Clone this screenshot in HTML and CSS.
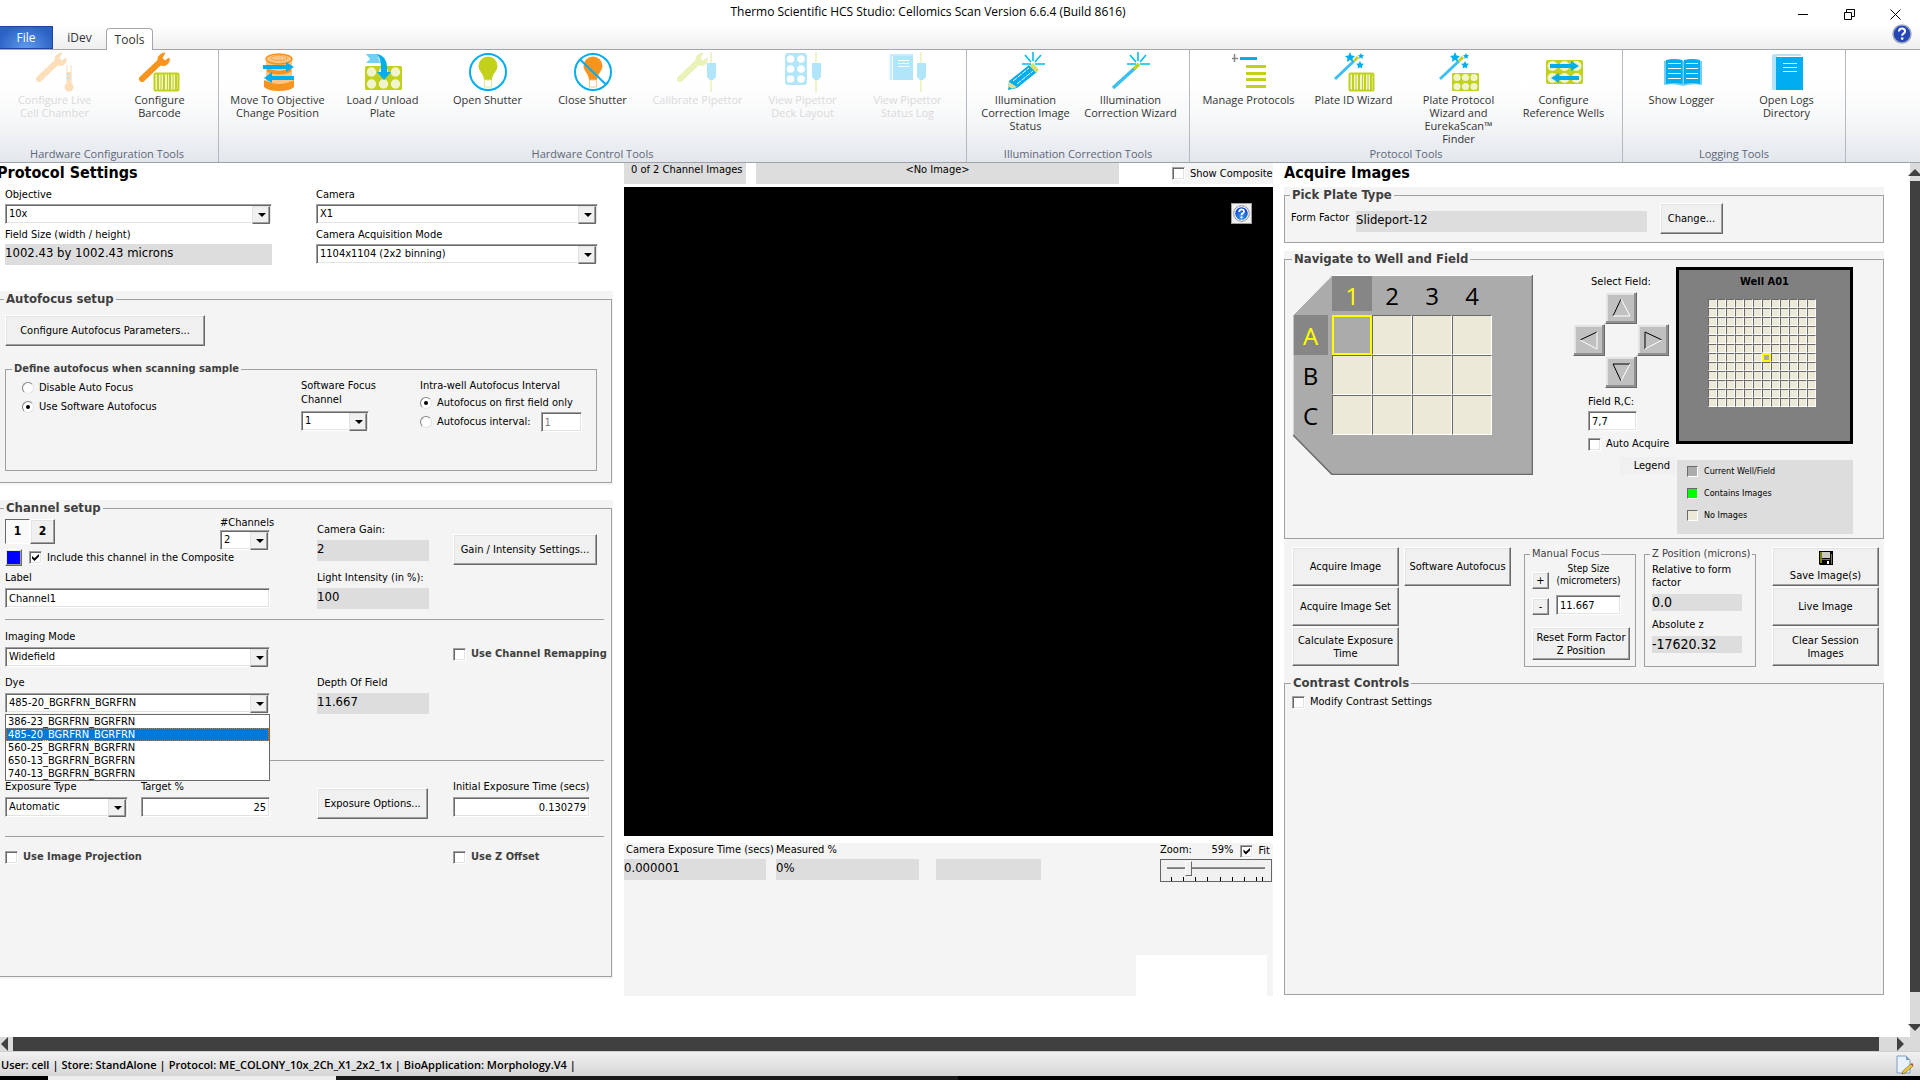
FILE: index.html
```html
<!DOCTYPE html>
<html lang="en">
<head>
  <meta charset="UTF-8">
  <title>Thermo Scientific HCS Studio</title>
  <meta name="viewport" content="width=device-width, initial-scale=1.0">
  <link rel="stylesheet" href="styles.css">
</head>
<body>
  <svg class="defs" aria-hidden="true">
    <symbol id="wrench" viewBox="0 0 48 40">
      <path d="M6 27 L25 9" stroke="currentColor" stroke-width="6" stroke-linecap="round" fill="none"/>
      <path d="M28 1 Q21 3 22 9 Q24 15 30 13 Q34 11 33 6 L29 9 L26 6 L29 1 Z" fill="currentColor" stroke="currentColor"/>
    </symbol>
    <symbol id="pipette" viewBox="0 0 48 40">
      <path d="M37 0 V40" stroke="#c1d11c" stroke-width="1.5"/>
      <path d="M33 11 h9 v14 l-3 3 h-3 l-3 -3 z" fill="#00adef"/>
    </symbol>
    <symbol id="barcode" viewBox="0 0 48 40">
      <rect x="18.500" y="21.500" width="24" height="17" rx="1" fill="#eff4cf" stroke="#c1d11c" stroke-width="2"/>
      <path d="M22 22v16M28 22v16M34 22v16M40 22v16" stroke="#c1d11c" stroke-width="2"/>
      <path d="M25 22v16M31.500 22v16M37 22v16" stroke="#c1d11c"/>
    </symbol>
    <symbol id="wand" viewBox="0 0 48 40">
      <path d="M5 27 L24 9" stroke="#3cc0f3" stroke-width="3"/>
      <path d="M24 9 L28 5" stroke="#c1d11c" stroke-width="3"/>
      <path fill="#00adef" d="M20 0l1.500 3.500 3.500.5-2.500 2.500.5 3.500-3-2-3 2 .5-3.500-2.500-2.500 3.500-.5zM31 1l1 2 2 .3-1.500 1.500.4 2-1.900-1-1.900 1 .4-2-1.500-1.500 2-.3zM30 9l1.200 2.400 2.800.4-2 2 .4 2.700-2.400-1.300-2.400 1.300.4-2.700-2-2 2.800-.4z"/>
    </symbol>
    <symbol id="spark" viewBox="0 0 48 40">
      <path d="M31 0v9M20 12h9M33 12h10M23 3l6 7M39 3l-6 7" stroke="#00bdf2" stroke-width="1.600"/>
    </symbol>
    <radialGradient id="helpFill" cy=".75" r=".7"><stop offset="0" stop-color="#35a2ff"/><stop offset="1" stop-color="#0b3fc4"/></radialGradient>
  </svg>

  <header class="titlebar">
    <h1 class="app-title">Thermo Scientific HCS Studio: Cellomics Scan Version 6.6.4 (Build 8616)</h1>
    <div class="window-buttons">
      <button class="win-btn" aria-label="Minimize"><svg width="11" height="11"><path d="M0 5.500h10" stroke="#000"/></svg></button>
      <button class="win-btn" aria-label="Restore"><svg width="11" height="11" fill="none" stroke="#000"><path d="M.5 3.500h7v7h-7zM2.500 3.500v-3h8v7h-3"/></svg></button>
      <button class="win-btn" aria-label="Close"><svg width="11" height="11"><path d="M.5 .5l10 10M10.500 .5l-10 10" stroke="#000"/></svg></button>
    </div>
  </header>

  <nav class="tabs">
    <button class="tab tab-file">File</button>
    <button class="tab">iDev</button>
    <button class="tab tab-active">Tools</button>
    <button class="help-btn" aria-label="Help">
      <svg width="20" height="20"><circle cx="10" cy="10" r="9" fill="#2447b5" stroke="#9fa8bd" stroke-width="1.500"/><path d="M7 7.500q0-3 3-3t3 2.700q0 1.600-1.600 2.400-1.200.7-1.200 2.200" stroke="#fff" stroke-width="2" fill="none"/><circle cx="10.200" cy="14.600" r="1.300" fill="#fff"/></svg>
    </button>
  </nav>

  <section class="ribbon">
    <div class="ribbon-group">
      <div class="ribbon-items">
        <button class="tool" disabled>
          <svg class="icon" viewBox="0 0 48 40" color="#f7941d"><use href="#wrench" x="2"/><path d="M38 13v20" stroke="#f7941d" stroke-width="5"/><path d="M38 12v8" stroke="#fff" stroke-width="3"/><path d="M35 22h4M35 26h4" stroke="#00adef"/><circle cx="38" cy="35" r="4.500" fill="#f7941d"/></svg>
          Configure Live<br>Cell Chamber</button>
        <button class="tool">
          <svg class="icon" viewBox="0 0 48 40" color="#f7941d"><use href="#wrench"/><use href="#barcode"/></svg>
          Configure<br>Barcode</button>
      </div>
      <div class="group-name">Hardware Configuration Tools</div>
    </div>
    <div class="ribbon-group">
      <div class="ribbon-items">
        <button class="tool">
          <svg class="icon" viewBox="0 0 48 40"><path d="M12 7v25h26V7z" fill="#fcc486"/><ellipse cx="25" cy="7" rx="13" ry="5" fill="#fcc486" stroke="#f7941d" stroke-width="1.500"/><ellipse cx="25" cy="6" rx="8" ry="2.500" fill="none" stroke="#f7941d" stroke-dasharray="2 1"/><path d="M13 16q12 6 24 0v4q-12 5-24 0z" fill="#f7941d"/><path d="M10 28q15 8 30 0v7q-4 4-15 4t-15-4z" fill="#f7941d"/><path d="M9 13h23v-3l8 5-8 5v-3H9zM40 24H18v-4l-8 6 8 5v-3h22z" fill="#00adef"/></svg>
          Move To Objective<br>Change Position</button>
        <button class="tool">
          <svg class="icon" viewBox="0 0 48 40"><rect x="6" y="14" width="37" height="24" rx="1.500" fill="#c1d11c"/><g fill="#eff4cf"><circle cx="12.500" cy="20" r="4.700"/><circle cx="24.500" cy="20" r="4.700"/><circle cx="36.500" cy="20" r="4.700"/><circle cx="12.500" cy="32" r="4.700"/><circle cx="24.500" cy="32" r="4.700"/><circle cx="36.500" cy="32" r="4.700"/></g><path d="M7 2h13q-2 4 2 9H7l4-4z" fill="#74cff5"/><path d="M18 2q10 2 10 13v5h4l-7 8-7-8h4v-5q0-8-4-13z" fill="#00adef"/></svg>
          Load / Unload<br>Plate</button>
        <button class="tool">
          <svg class="icon" viewBox="0 0 48 40"><circle cx="24" cy="20" r="18" fill="#fff" stroke="#00adef" stroke-width="2"/><path d="M24 4.500a9.500 9.500 0 0 1 9.500 9.500c0 5-5.500 8-5.500 14h-8c0-6-5.500-9-5.500-14a9.500 9.500 0 0 1 9.500-9.500z" fill="#c1d11c"/><path d="M20.500 28v7h7v-7z" fill="#fff" stroke="#dfe68d"/></svg>
          Open Shutter</button>
        <button class="tool">
          <svg class="icon" viewBox="0 0 48 40"><circle cx="24" cy="20" r="18" fill="#fff"/><path d="M24 4.500a9.500 9.500 0 0 1 9.500 9.500c0 5-5.500 8-5.500 14h-8c0-6-5.500-9-5.500-14a9.500 9.500 0 0 1 9.500-9.500z" fill="#f7941d"/><path d="M20.500 28v7h7v-7z" fill="#fff" stroke="#fcc486"/><path d="M11 7.500l26 25" stroke="#00adef" stroke-width="2"/><circle cx="24" cy="20" r="18" fill="none" stroke="#00adef" stroke-width="2"/></svg>
          Close Shutter</button>
        <button class="tool" disabled>
          <svg class="icon" viewBox="0 0 48 40" color="#c1d11c"><use href="#wrench"/><use href="#pipette"/></svg>
          Calibrate Pipettor</button>
        <button class="tool" disabled>
          <svg class="icon" viewBox="0 0 48 40"><rect x="6" y="1" width="22" height="32" rx="3" fill="#00adef"/><g fill="#fff"><circle cx="11.500" cy="7" r="3.800"/><circle cx="22" cy="7" r="3.800"/><circle cx="11.500" cy="17" r="3.800"/><circle cx="22" cy="17" r="3.800"/><circle cx="11.500" cy="27" r="3.800"/><circle cx="22" cy="27" r="3.800"/></g><use href="#pipette"/></svg>
          View Pipettor<br>Deck Layout</button>
        <button class="tool" disabled>
          <svg class="icon" viewBox="0 0 48 40"><path d="M9 4h20v24H9z" fill="#00adef"/><path d="M7 28V3h22" fill="none" stroke="#00adef" stroke-width="1.500"/><path d="M14 8.500h11M14 11.500h11M14 14.500h11" stroke="#fff"/><use href="#pipette"/></svg>
          View Pipettor<br>Status Log</button>
      </div>
      <div class="group-name">Hardware Control Tools</div>
    </div>
    <div class="ribbon-group">
      <div class="ribbon-items">
        <button class="tool">
          <svg class="icon" viewBox="0 0 48 40"><path d="M6 38l1-9 20-16 8 7-20 16z" fill="#00adef"/><path d="M11 29l16-13M15 32l16-13" stroke="#fff" stroke-dasharray="5 1"/><path d="M27 13l4-2 6 7-3 3z" fill="#d7de6a"/><path d="M6 38l1-8 8 5z" fill="#e3e093"/><path d="M6 38l1-3 3 1.500z" fill="#00adef"/><use href="#spark"/></svg>
          Illumination<br>Correction Image<br>Status</button>
        <button class="tool">
          <svg class="icon" viewBox="0 0 48 40"><path d="M6 36L28 16" stroke="#3cc0f3" stroke-width="3.500"/><path d="M27 17l5-5" stroke="#c1d11c" stroke-width="3.500"/><use href="#spark"/></svg>
          Illumination<br>Correction Wizard</button>
      </div>
      <div class="group-name">Illumination Correction Tools</div>
    </div>
    <div class="ribbon-group">
      <div class="ribbon-items">
        <button class="tool">
          <svg class="icon" viewBox="0 0 48 40"><path d="M7 6.500h6M9.500 2v8" stroke="#888" stroke-width="1.500"/><path d="M15 6.500h17" stroke="#00adef" stroke-width="3"/><path d="M21 14.500h20M21 21.500h20M21 27.500h20M21 34.500h20" stroke="#c1d11c" stroke-width="3"/></svg>
          Manage Protocols</button>
        <button class="tool">
          <svg class="icon" viewBox="0 0 48 40"><use href="#wand"/><use href="#barcode" x="1"/></svg>
          Plate ID Wizard</button>
        <button class="tool">
          <svg class="icon" viewBox="0 0 48 40"><use href="#wand"/><rect x="17" y="21" width="27" height="18" rx="1" fill="#c1d11c"/><g fill="#eff4cf"><circle cx="22" cy="25.500" r="3.600"/><circle cx="30.500" cy="25.500" r="3.600"/><circle cx="39" cy="25.500" r="3.600"/><circle cx="22" cy="34.500" r="3.600"/><circle cx="30.500" cy="34.500" r="3.600"/><circle cx="39" cy="34.500" r="3.600"/></g></svg>
          Plate Protocol<br>Wizard and<br>EurekaScan™<br>Finder</button>
        <button class="tool">
          <svg class="icon" viewBox="0 0 48 40"><rect x="6" y="8" width="37" height="24" rx="2" fill="#c1d11c"/><g fill="#eff4cf"><circle cx="12.500" cy="14" r="5"/><circle cx="24.500" cy="14" r="5"/><circle cx="36.500" cy="14" r="5"/><circle cx="12.500" cy="26" r="5"/><circle cx="24.500" cy="26" r="5"/><circle cx="36.500" cy="26" r="5"/></g><path d="M10 12h21V9l8 5-8 5v-3H10zM39 24H19v-3l-8 5 8 5v-3h20z" fill="#00adef"/></svg>
          Configure<br>Reference Wells</button>
      </div>
      <div class="group-name">Protocol Tools</div>
    </div>
    <div class="ribbon-group">
      <div class="ribbon-items">
        <button class="tool">
          <svg class="icon" viewBox="0 0 48 40"><path d="M6 9h38v24q-10-2-19 1q-9-3-19-1z" fill="#74cff5"/><path d="M8 8q8-2 16.500 0v24q-8-2-16.500 0zM26 8q8-2 16 0v24q-8-2-16 0z" fill="#00adef"/><path d="M10 11.500h13M10 16.500h13M10 21.500h13M10 26.500h13M28 11.500h12M28 16.500h12M28 21.500h12M28 26.500h12" stroke="#fff"/></svg>
          Show Logger</button>
        <button class="tool">
          <svg class="icon" viewBox="0 0 48 40"><path d="M9 4q0-2 3-2h26v2H14v34H9z" fill="#b3e5fa"/><path d="M13 5h27v33H13z" fill="#00adef"/><path d="M20 11.500h14M20 15.500h14M20 19.500h14" stroke="#fff"/></svg>
          Open Logs<br>Directory</button>
      </div>
      <div class="group-name">Logging Tools</div>
    </div>
  </section>

  <div class="workspace">
    <main class="columns">

      <!-- Protocol settings -->
      <section class="settings">
        <h2 class="page-title page-title-left">Protocol Settings</h2>
        <div class="top-fields">
          <div class="field objective">
            <label for="objective">Objective</label>
            <span class="combo"><select id="objective"><option>10x</option></select></span>
          </div>
          <div class="field">
            <label for="camera">Camera</label>
            <span class="combo"><select id="camera"><option>X1</option></select></span>
          </div>
          <div class="field objective">
            <span>Field Size (width / height)</span>
            <output class="readout">1002.43 by 1002.43 microns</output>
          </div>
          <div class="field">
            <label for="acqMode">Camera Acquisition Mode</label>
            <span class="combo"><select id="acqMode"><option>1104x1104 (2x2 binning)</option></select></span>
          </div>
        </div>

        <div class="panel panel-left">
          <fieldset class="group autofocus">
            <legend>Autofocus setup</legend>
            <button class="btn btn-wide">Configure Autofocus Parameters...</button>
            <fieldset class="group group-inner">
              <legend>Define autofocus when scanning sample</legend>
              <div class="af-mode">
                <label class="radio"><input type="radio" name="af">Disable Auto Focus</label>
                <label class="radio"><input type="radio" name="af" checked>Use Software Autofocus</label>
              </div>
              <div class="af-channel">
                <label for="focusChannel">Software Focus<br>Channel</label>
                <span class="combo"><select id="focusChannel"><option>1</option></select></span>
              </div>
              <div class="af-interval">
                <span>Intra-well Autofocus Interval</span>
                <label class="radio"><input type="radio" name="interval" checked>Autofocus on first field only</label>
                <div class="interval-row">
                  <label class="radio"><input type="radio" name="interval">Autofocus interval:</label>
                  <input class="text" type="text" value="1" aria-label="Autofocus interval" disabled>
                </div>
              </div>
            </fieldset>
          </fieldset>
        </div>

        <div class="panel panel-left panel-channel">
          <fieldset class="group channel">
            <legend>Channel setup</legend>
            <div class="row row-gain">
              <div class="col">
                <div class="channel-head">
                  <div class="channel-tabs">
                    <button class="channel-tab channel-tab-on">1</button>
                    <button class="channel-tab">2</button>
                  </div>
                  <div class="channel-count">
                    <label for="channels">#Channels</label>
                    <span class="combo"><select id="channels"><option>2</option></select></span>
                  </div>
                </div>
                <div class="composite">
                  <button class="swatch" aria-label="Channel color"></button>
                  <label class="check"><input type="checkbox" checked>Include this channel in the Composite</label>
                </div>
                <div class="field">
                  <label for="chLabel">Label</label>
                  <input class="text" id="chLabel" type="text" value="Channel1">
                </div>
              </div>
              <div class="col col-readouts">
                <div class="field"><span>Camera Gain:</span><output class="readout">2</output></div>
                <div class="field"><span>Light Intensity (in %):</span><output class="readout">100</output></div>
              </div>
              <div class="col col-gain-btn"><button class="btn btn-gain">Gain / Intensity Settings...</button></div>
            </div>
            <hr>
            <div class="row row-dye">
              <div class="col">
                <div class="field">
                  <label for="mode">Imaging Mode</label>
                  <span class="combo"><select id="mode"><option>Widefield</option></select></span>
                </div>
                <div class="field dye">
                  <label for="dye">Dye</label>
                  <span class="combo"><select id="dye"><option>485-20_BGRFRN_BGRFRN</option></select></span>
                  <ul class="dropdown" role="listbox" aria-label="Dye">
                    <li role="option">386-23_BGRFRN_BGRFRN</li>
                    <li role="option" aria-selected="true" class="selected">485-20_BGRFRN_BGRFRN</li>
                    <li role="option">560-25_BGRFRN_BGRFRN</li>
                    <li role="option">650-13_BGRFRN_BGRFRN</li>
                    <li role="option">740-13_BGRFRN_BGRFRN</li>
                  </ul>
                </div>
              </div>
              <div class="col col-depth">
                <div class="field"><span>Depth Of Field</span><output class="readout">11.667</output></div>
              </div>
              <div class="col col-remap">
                <label class="check check-bold"><input type="checkbox">Use Channel Remapping</label>
              </div>
            </div>
            <hr>
            <div class="row row-exposure">
              <div class="col exposure-fields">
                <div class="field exposure-type">
                  <label for="expType">Exposure Type</label>
                  <span class="combo"><select id="expType"><option>Automatic</option></select></span>
                </div>
                <div class="field target">
                  <label for="target">Target %</label>
                  <input class="text num" id="target" type="text" value="25">
                </div>
              </div>
              <div class="col col-exp-btn"><button class="btn btn-exposure">Exposure Options...</button></div>
              <div class="col">
                <div class="field initial">
                  <label for="initial">Initial Exposure Time (secs)</label>
                  <input class="text num" id="initial" type="text" value="0.130279">
                </div>
              </div>
            </div>
            <hr>
            <div class="row row-last">
              <label class="check check-bold"><input type="checkbox">Use Image Projection</label>
              <span></span>
              <label class="check check-bold"><input type="checkbox">Use Z Offset</label>
            </div>
          </fieldset>
        </div>
      </section>

      <!-- Image viewer -->
      <section class="viewer">
        <div class="viewer-head">
          <span class="channel-images">0 of 2 Channel Images</span>
          <span class="image-name">&lt;No Image&gt;</span>
          <label class="check composite-check"><input type="checkbox">Show Composite</label>
        </div>
        <div class="image">
          <button class="image-help" aria-label="Help">
            <svg width="17" height="17"><circle cx="8.500" cy="8.500" r="7.800" fill="#fff" stroke="#8a8f98"/><circle cx="8.500" cy="8.500" r="6.300" fill="url(#helpFill)"/><path d="M6.200 7q0-2.600 2.400-2.600t2.400 2.100q0 1.100-1.300 1.800-1.200.6-1.200 1.900" stroke="#fff" stroke-width="1.800" fill="none"/><circle cx="8.500" cy="12.400" r="1.100" fill="#fff"/></svg>
          </button>
        </div>
        <div class="viewer-foot">
          <div class="field foot-exposure"><span>Camera Exposure Time (secs)</span><output class="readout">0.000001</output></div>
          <div class="field foot-measured"><span>Measured %</span><output class="readout">0%</output></div>
          <div class="field foot-blank"><output class="readout"></output></div>
          <div class="zoom">
            <div class="zoom-head">
              <label for="zoom">Zoom:</label>
              <span class="zoom-value">59%</span>
              <label class="check"><input type="checkbox" checked>Fit</label>
            </div>
            <div class="zoom-box">
              <input id="zoom" type="range" min="0" max="100" value="20">
              <svg class="ticks" width="112" height="4"><path d="M10.500 0v4M22.500 0v4M34.500 0v4M46.500 0v4M59.500 0v4M71.500 0v4M83.500 0v4M95.500 0v4M101.500 0v4" stroke="#000"/></svg>
            </div>
          </div>
          <div class="foot-white"></div>
        </div>
      </section>

      <!-- Acquisition -->
      <section class="acquire">
        <h2 class="page-title">Acquire Images</h2>
        <div class="panel">
          <fieldset class="group plate-type">
            <legend>Pick Plate Type</legend>
            <span class="form-factor">Form Factor</span>
            <output class="readout">Slideport-12</output>
            <button class="btn">Change...</button>
          </fieldset>
        </div>

        <div class="panel panel-navigate">
          <fieldset class="group navigate">
            <legend>Navigate to Well and Field</legend>
            <div class="plate-wrap">
              <div class="plate" id="plate"></div>
              <svg class="plate-edge" viewBox="0 0 240 200" fill="none"><path d="M0 160V40L39 .5H239" stroke="#fff"/><path d="M0 160l39 39.500h200.500V0" stroke="#696969" stroke-width="1.500"/></svg>
            </div>
            <div class="field-nav">
              <span class="select-field">Select Field:</span>
              <div class="pad">
                <button class="arrow up" aria-label="Up"><svg width="20" height="20" fill="none"><path d="M2 18L10 1" stroke="#000"/><path d="M10 1l9 17H2" stroke="#fff"/></svg></button>
                <button class="arrow left" aria-label="Left"><svg width="20" height="20" fill="none"><path d="M1 10L18 2" stroke="#000"/><path d="M18 2v17L1 10" stroke="#fff"/></svg></button>
                <button class="arrow right" aria-label="Right"><svg width="20" height="20" fill="none"><path d="M2 19V2l17 8" stroke="#000"/><path d="M19 10L2 19" stroke="#fff"/></svg></button>
                <button class="arrow down" aria-label="Down"><svg width="20" height="20" fill="none"><path d="M10 19L2 2h17" stroke="#000"/><path d="M19 2l-9 17" stroke="#fff"/></svg></button>
              </div>
              <div class="field field-rc">
                <label for="fieldRC">Field R,C:</label>
                <input class="text" id="fieldRC" type="text" value="7,7">
                <label class="check"><input type="checkbox">Auto Acquire</label>
              </div>
              <span class="legend-label">Legend</span>
            </div>
            <div class="well-side">
              <div class="well">
                <strong>Well A01</strong>
                <div class="fields" id="fields"></div>
              </div>
              <ul class="legend">
                <li><i class="key key-current"></i>Current Well/Field</li>
                <li><i class="key key-images"></i>Contains Images</li>
                <li><i class="key"></i>No Images</li>
              </ul>
            </div>
          </fieldset>
        </div>

        <div class="panel panel-actions">
          <div class="actions">
            <div class="action-grid">
              <button class="btn">Acquire Image</button>
              <button class="btn">Software Autofocus</button>
              <button class="btn">Acquire Image Set</button>
              <span></span>
              <button class="btn">Calculate Exposure<br>Time</button>
            </div>
            <fieldset class="group mini manual">
              <legend>Manual Focus</legend>
              <div class="step">
                <button class="btn step-btn">+</button>
                <label class="step-label" for="step">Step Size<br>(micrometers)</label>
                <button class="btn step-btn">-</button>
                <input class="text" id="step" type="text" value="11.667">
              </div>
              <button class="btn reset">Reset Form Factor<br>Z Position</button>
            </fieldset>
            <fieldset class="group mini zpos">
              <legend>Z Position (microns)</legend>
              <span>Relative to form<br>factor</span>
              <output class="readout">0.0</output>
              <span>Absolute z</span>
              <output class="readout">-17620.32</output>
            </fieldset>
            <div class="action-col">
              <button class="btn"><svg width="14" height="14"><path d="M0 0h14v14H1l-1-1z"/><path d="M1 1h2v11H1zM12 3h1v10h-1zM3 8h8v1H3z" fill="#808000"/><path d="M3 1h8v6H3z" fill="#c8c8c8"/><path d="M8 10h2v3H8z" fill="#fff"/></svg>Save Image(s)</button>
              <button class="btn">Live Image</button>
              <button class="btn">Clear Session<br>Images</button>
            </div>
          </div>
          <fieldset class="group contrast">
            <legend>Contrast Controls</legend>
            <label class="check"><input type="checkbox">Modify Contrast Settings</label>
          </fieldset>
        </div>
      </section>
    </main>
    <div class="vscroll">
      <span class="tri tri-up"></span>
      <span class="vthumb"></span>
      <span class="tri tri-down"></span>
    </div>
  </div>

  <div class="hscroll">
    <span class="tri tri-left"></span>
    <span class="hthumb"></span>
    <span class="tri tri-right"></span>
  </div>

  <footer class="status">
    <span>User: cell</span><span>|</span><span>Store: StandAlone</span><span>|</span><span>Protocol: ME_COLONY_10x_2Ch_X1_2x2_1x</span><span>|</span><span>BioApplication: Morphology.V4</span><span>|</span>
    <svg class="note" width="18" height="20"><path d="M1 1h9l4 4v13H1z" fill="#e9f1fc" stroke="#7f9cc4"/><path d="M10 1v4h4" fill="#7f9cc4"/><path d="M6 19l1-3 8-7 2 2-8 7z" fill="#f3c93b" stroke="#7a6320" stroke-width=".7"/><path d="M14.500 9l1.500-1 1.500 1.500-1 1.500z" fill="#c0504d"/></svg>
  </footer>
  <div class="desktop"></div>

  <script>
    const plate = document.getElementById('plate');
    const fields = document.getElementById('fields');

    function addCell(parent, className, text) {
      const cell = document.createElement('span');
      cell.className = className;
      cell.textContent = text || '';
      parent.appendChild(cell);
    }

    addCell(plate, 'corner');
    for (const col of [1, 2, 3, 4]) {
      addCell(plate, col === 1 ? 'col-head on' : 'col-head', col);
    }
    for (const row of ['A', 'B', 'C']) {
      addCell(plate, row === 'A' ? 'row-head on' : 'row-head', row);
      for (let col = 1; col <= 4; col++) {
        addCell(plate, row === 'A' && col === 1 ? 'cell current' : 'cell');
      }
    }

    // 12 x 12 fields, current field is 7,7
    for (let i = 0; i < 144; i++) {
      addCell(fields, i === 6 * 12 + 6 ? 'dot current' : 'dot');
    }
  </script>
</body>
</html>
```
FILE: styles.css
```css
* {
  box-sizing: border-box;
}
body {
  margin: 0;
  height: 100vh;
  display: flex;
  flex-direction: column;
  overflow: hidden;
  background: #fff;
  color: #000;
  font: 11px/14px "DejaVu Sans Condensed", Tahoma, sans-serif;
}
button, input, select {
  font: inherit;
  color: inherit;
  margin: 0;
}
.defs {
  position: absolute;
  width: 0;
  height: 0;
}

/* title bar and tabs */
.titlebar {
  display: flex;
  height: 26px;
  padding-right: 2px;
}
.app-title {
  flex: 1;
  margin: 0;
  padding-left: 76px;
  text-align: center;
  font: 12px/24px "Open Sans", "Segoe UI", sans-serif;
}
.window-buttons {
  display: flex;
}
.win-btn {
  width: 46px;
  padding: 3px 0 0;
  border: none;
  background: none;
}
.win-btn svg {
  display: block;
  margin: auto;
}
.tabs {
  display: flex;
  align-items: flex-end;
  height: 24px;
  background: linear-gradient(#fff, #eee);
  border-bottom: 1px solid #a3a7ad;
  font: 12px/18px "Open Sans", "Segoe UI", sans-serif;
}
.tab {
  width: 53px;
  height: 23px;
  padding: 0;
  border: none;
  background: none;
  color: #333;
}
.tab-file {
  background: radial-gradient(ellipse at bottom, #5e9bec, #2b60c4 80%);
  border: 1px solid #1c46a0;
  border-left: none;
  color: #fff;
}
.tab-active {
  width: 47px;
  height: 22px;
  margin-bottom: -1px;
  background: #fff;
  border: 1px solid #a3a7ad;
  border-bottom: none;
  border-radius: 4px 4px 0 0;
}
.help-btn {
  margin: 0 8px 5px auto;
  padding: 0;
  border: none;
  background: none;
  height: 20px;
}

/* ribbon */
.ribbon {
  display: flex;
  height: 113px;
  background: linear-gradient(#fff 30%, #f7f8f9 60%, #e3e7ec);
  border-bottom: 1px solid #9da2ad;
  font: 11px/13px "Open Sans", "Segoe UI", sans-serif;
}
.ribbon-group {
  display: flex;
  flex-direction: column;
  padding: 2px 6px 0;
  border-right: 1px solid #b5bac2;
}
.ribbon-group:first-child {
  padding-left: 2px;
}
.ribbon-items {
  flex: 1;
  display: flex;
}
.tool {
  display: block;
  width: 105px;
  padding: 0;
  border: none;
  background: none;
  color: #333;
  text-align: center;
  align-self: flex-start;
}
.tool:disabled {
  color: #dadada;
}
.tool:disabled .icon {
  opacity: .3;
}
.icon {
  display: block;
  width: 48px;
  height: 40px;
  margin: 0 auto 1px;
}
.group-name {
  color: #5e6678;
  line-height: 14px;
  padding-bottom: 1px;
  text-align: center;
}

/* classic 3D controls */
.btn, .swatch, .channel-tab {
  padding: 0 4px;
  border: 1px solid;
  border-color: #fff #696969 #696969 #fff;
  box-shadow: inset -1px -1px #a0a0a0, inset 1px 1px #e3e3e3;
  background: #f0f0f0;
  line-height: 13px;
}
.text, .combo, .check input {
  border: 1px solid;
  border-color: #a0a0a0 #fff #fff #a0a0a0;
  box-shadow: inset 1px 1px #696969, inset -1px -1px #e3e3e3;
  background: #fff;
}
.text {
  display: block;
  width: 100%;
  height: 20px;
  padding: 0 3px;
  border-radius: 0;
}
.text:disabled {
  color: #808080;
}
.num {
  text-align: right;
}
.combo {
  display: block;
  position: relative;
  height: 20px;
}
.combo select {
  display: block;
  width: 100%;
  height: 18px;
  padding: 0 18px 0 3px;
  border: none;
  border-radius: 0;
  background: none;
  appearance: none;
}
.combo::before {
  content: "";
  position: absolute;
  top: 1px;
  right: 1px;
  width: 16px;
  height: 16px;
  border: 1px solid;
  border-color: #e3e3e3 #696969 #696969 #e3e3e3;
  box-shadow: inset -1px -1px #a0a0a0;
  background: #f0f0f0;
  pointer-events: none;
}
.combo::after {
  content: "";
  position: absolute;
  top: 8px;
  right: 5px;
  border: 4px solid transparent;
  border-top-color: #000;
  border-bottom: none;
  pointer-events: none;
}
.check, .radio {
  display: flex;
  align-items: center;
  gap: 5px;
}
.check input {
  appearance: none;
  position: relative;
  width: 13px;
  height: 13px;
}
.check input:checked::after {
  content: "";
  position: absolute;
  inset: 2px;
  background: #000;
  clip-path: polygon(0 30%, 35% 62%, 100% 0, 100% 35%, 35% 100%, 0 65%);
}
.check-bold {
  font-weight: bold;
  color: #3f3f3f;
}
.radio {
  height: 19px;
}
.radio input {
  appearance: none;
  position: relative;
  width: 12px;
  height: 12px;
  border: 1px solid;
  border-color: #808080 #e3e3e3 #e3e3e3 #808080;
  border-radius: 50%;
  background: #fff;
}
.radio input:checked::after {
  content: "";
  position: absolute;
  inset: 3px;
  border-radius: 50%;
  background: #000;
}
.readout {
  display: block;
  height: 21px;
  background: #ddd;
  font-size: 13px;
  line-height: 17px;
}
.field {
  display: flex;
  flex-direction: column;
  gap: 2px;
}
.field > label, .field > span:not(.combo) {
  white-space: nowrap;
}
.panel {
  background: #f4f4f4;
}
.group {
  min-width: 0;
  margin: 0;
  padding: 0;
  border: 1px solid #a0a0a0;
}
.group > legend {
  margin-left: -1px;
  padding: 0 2px;
  color: #3f3f3f;
  font-size: 13px;
  font-weight: bold;
  line-height: 16px;
}
hr {
  width: 100%;
  height: 1px;
  margin: 0;
  border: none;
  background: #a0a0a0;
}

/* page layout */
.workspace {
  flex: 1;
  min-height: 0;
  display: flex;
}
.columns {
  flex: 1;
  display: grid;
  grid-template-columns: minmax(0, 613fr) minmax(0, 649fr) minmax(0, 600fr);
  column-gap: 11px;
  align-items: start;
  padding-right: 26px;
}
.page-title {
  margin: 0;
  font-size: 16px;
  line-height: 20px;
}
.page-title-left {
  margin-left: -3px;
}

/* protocol settings */
.top-fields {
  display: grid;
  grid-template-columns: 311px 282px;
  row-gap: 4px;
  padding: 5px 0 0 5px;
}
.objective {
  width: 267px;
}
.panel-left {
  padding: 0 1px 2px 0;
  margin-top: 26px;
}
.panel-left > .group {
  margin-left: -2px;
}
.autofocus {
  padding: 8px 14px 11px 6px;
}
.btn-wide {
  width: 200px;
  height: 31px;
}
.group-inner {
  display: flex;
  min-height: 109px;
  margin-top: 16px;
}
.group-inner > legend {
  margin-left: 6px;
  font-size: 11px;
  line-height: 14px;
}
.af-mode {
  width: 295px;
  padding: 2px 0 0 16px;
}
.af-channel {
  width: 119px;
  padding-top: 3px;
}
.af-channel .combo {
  width: 68px;
  margin-top: 4px;
}
.af-interval {
  padding-top: 3px;
  white-space: nowrap;
}
.interval-row {
  display: flex;
}
.interval-row .text {
  width: 41px;
  margin-left: 10px;
}
.panel-channel {
  margin-top: 15px;
}
.channel {
  min-height: 477px;
  padding: 0 7px 0 6px;
}
.channel .field {
  gap: 3px;
}
.row {
  display: grid;
  grid-template-columns: 265px 112px 1fr;
  column-gap: 47px;
}
.row > :last-child {
  margin-left: -23px;
}
.row-gain {
  height: 103px;
}
.channel-head {
  display: flex;
  justify-content: space-between;
  height: 33px;
}
.channel-tabs {
  display: flex;
  padding-top: 3px;
}
.channel-tab {
  width: 25px;
  height: 25px;
  padding: 0;
  font-size: 12px;
  font-weight: bold;
}
.channel-tab-on {
  border-color: #696969 #fff #fff #696969;
  box-shadow: none;
  background: #fafafa;
}
.channel-count {
  width: 50px;
  white-space: nowrap;
}
.composite {
  display: flex;
  gap: 7px;
  margin-bottom: 5px;
}
.swatch {
  width: 17px;
  height: 17px;
  background: #00f;
}
.col-readouts {
  display: flex;
  flex-direction: column;
  gap: 10px;
  padding-top: 7px;
}
.col-gain-btn {
  padding-top: 18px;
}
.btn-gain {
  width: 144px;
  height: 31px;
}
.row-dye {
  height: 140px;
  padding-top: 10px;
}
.dye {
  position: relative;
  margin-top: 9px;
}
.dropdown {
  position: absolute;
  top: 38px;
  left: 0;
  z-index: 1;
  width: 265px;
  margin: 0;
  padding: 0;
  border: 1px solid #696969;
  background: #fff;
  list-style: none;
  line-height: 13px;
}
.dropdown li {
  padding-left: 2px;
}
.dropdown .selected {
  background: #0078d7;
  color: #fff;
  outline: 1px dotted #d07a2a;
  outline-offset: -1px;
}
.col-depth {
  padding-top: 46px;
}
.col-remap {
  padding-top: 17px;
  white-space: nowrap;
}
.row-exposure {
  height: 75px;
  padding-top: 19px;
}
.exposure-fields {
  display: flex;
  gap: 13px;
}
.exposure-type {
  width: 123px;
}
.target {
  width: 129px;
}
.initial {
  width: 137px;
}
.col-exp-btn {
  padding-top: 8px;
}
.btn-exposure {
  width: 111px;
  height: 31px;
  white-space: nowrap;
}
.row-last {
  padding-top: 13px;
}

/* viewer */
.viewer-head {
  display: flex;
  height: 24px;
}
.channel-images, .image-name {
  height: 21px;
  background: #ddd;
}
.channel-images {
  width: 122px;
  padding-left: 7px;
  white-space: nowrap;
}
.image-name {
  flex: 1;
  margin: 0 53px 0 10px;
  text-align: center;
}
.composite-check {
  width: 101px;
  height: 21px;
  background: #f4f4f4;
  white-space: nowrap;
}
.image {
  display: flex;
  justify-content: flex-end;
  align-items: flex-start;
  aspect-ratio: 1;
  padding: 16px 21px;
  background: #000;
}
.image-help {
  width: 21px;
  height: 21px;
  padding: 1px;
  border: 1px solid #a0a0a0;
  background: #f0f0f0;
}
.image-help svg {
  display: block;
}
.viewer-foot {
  display: grid;
  grid-template-columns: 142px 143px 105px 1fr;
  grid-template-rows: 112px 41px;
  column-gap: 10px;
  margin-top: 7px;
  background: #f4f4f4;
}
.viewer-foot > .foot-exposure > span {
  padding-left: 2px;
}
.foot-blank {
  margin-left: 7px;
  margin-right: -7px;
  padding-top: 16px;
}
.zoom {
  justify-self: end;
  width: 112px;
  margin-right: 1px;
}
.zoom-head {
  display: flex;
  gap: 7px;
  height: 16px;
}
.zoom-value {
  margin-left: auto;
}
.zoom-head .check {
  margin-right: 2px;
}
.zoom-box {
  height: 23px;
  border: 1px solid #646464;
  background: #f0f0f0;
}
.zoom-box input {
  display: block;
  width: 98px;
  height: 17px;
  margin: 0 auto;
  appearance: none;
  background: linear-gradient(#a0a0a0, #696969) 0 7px / 100% 2px no-repeat;
}
.zoom-box input::-webkit-slider-thumb {
  appearance: none;
  width: 7px;
  height: 15px;
  background: #f0f0f0;
  border: 1px solid;
  border-color: #fff #696969 #696969 #fff;
}
.ticks {
  display: block;
}
.foot-white {
  grid-column: 4;
  grid-row: 2;
  width: 131px;
  margin-right: 6px;
  justify-self: end;
  background: #fff;
}

/* acquire images */
.acquire .page-title {
  margin-bottom: 4px;
}
.plate-type {
  display: flex;
  height: 56px;
  padding-left: 6px;
}
.form-factor {
  width: 65px;
  padding-top: 8px;
}
.plate-type .readout {
  width: 291px;
  margin-top: 8px;
}
.plate-type .btn {
  width: 63px;
  height: 31px;
  margin-left: 13px;
}
.panel-navigate {
  margin-top: 8px;
}
.navigate {
  display: flex;
  height: 288px;
  padding-left: 8px;
}
.plate-wrap {
  position: relative;
  width: 240px;
  height: 200px;
  margin-top: 8px;
}
.plate {
  display: grid;
  grid-template-columns: 39px repeat(4, 40px);
  grid-template-rows: repeat(4, 40px);
  height: 200px;
  background: #ababab;
  clip-path: polygon(39px 0, 100% 0, 100% 100%, 39px 100%, 0 160px, 0 40px);
  font: 24px/36px "Open Sans", "Segoe UI", sans-serif;
  text-align: center;
}
.plate-edge {
  position: absolute;
  top: 0;
  left: 0;
}
.col-head {
  height: 36px;
  padding-top: 3px;
}
.row-head {
  width: 35px;
  padding-top: 3px;
}
.plate .on {
  background: #868686;
  color: #ff0;
}
.cell {
  border: 1px solid;
  border-color: #696969 #fff #fff #696969;
  background: #ece9d8;
}
.cell.current {
  border: 2px solid #ff0;
  background: #ababab;
}
.field-nav {
  width: 143px;
  padding: 8px 0 0 40px;
}
.select-field {
  display: block;
  padding-left: 18px;
}
.pad {
  display: grid;
  grid-template: repeat(3, 32px) / repeat(3, 32px);
  grid-template-areas: ". up ." "left . right" ". down .";
  margin: 3px 0 7px;
}
.arrow {
  padding: 5px;
  border: 1px solid;
  border-color: #f4f4f4 #696969 #696969 #f4f4f4;
  box-shadow: inset -2px -2px #909090, inset 2px 2px #e3e3e3;
  background: #c0c0c0;
}
.arrow svg {
  display: block;
}
.up {
  grid-area: up;
}
.left {
  grid-area: left;
}
.right {
  grid-area: right;
}
.down {
  grid-area: down;
}
.field-rc {
  padding-left: 15px;
}
.field-rc .text {
  width: 49px;
}
.field-rc .check {
  margin-top: 4px;
}
.legend-label {
  display: block;
  margin: 6px 0 0 47px;
  padding-right: 6px;
  background: #f0f0f0;
  line-height: 17px;
  text-align: right;
}
.well-side {
  width: 177px;
}
.well {
  height: 177px;
  padding-top: 5px;
  border: 3px solid #000;
  background: #808080;
  text-align: center;
}
.fields {
  display: grid;
  grid-template: repeat(12, 9px) / repeat(12, 9px);
  width: 108px;
  margin: 10px 0 0 29px;
}
.dot {
  border: 1px solid;
  border-color: #696969 #fff #fff #696969;
  background: #ece9d8;
}
.dot.current {
  border: 2px solid #ff0;
  background: #ababab;
}
.legend {
  height: 74px;
  margin: 16px 0 0 1px;
  padding: 0 0 0 10px;
  background: #ddd;
  list-style: none;
  font-size: 9px;
  line-height: 22px;
}
.legend li {
  display: flex;
  align-items: center;
  gap: 6px;
}
.key {
  width: 11px;
  height: 11px;
  border: 1px solid;
  border-color: #696969 #fff #fff #696969;
  background: #ece9d8;
}
.key-current {
  background: #ababab;
}
.key-images {
  background: #0f0;
}
.actions {
  display: flex;
  padding: 8px 5px 0 8px;
}
.action-grid {
  display: grid;
  grid-template: repeat(3, 39px) / repeat(2, 107px);
  gap: 1px 5px;
  margin-right: 13px;
}
.actions .btn {
  white-space: nowrap;
  padding: 0;
}
.mini {
  width: 112px;
  height: 120px;
  padding-left: 7px;
  margin-right: 8px;
}
.mini > legend {
  margin-left: -2px;
  font-size: 11px;
  font-weight: normal;
  line-height: 14px;
}
.step {
  display: grid;
  grid-template-columns: 17px 65px;
  grid-template-rows: 28px 20px;
  column-gap: 7px;
  row-gap: 6px;
  align-items: center;
}
.step-btn {
  height: 17px;
  align-self: end;
}
.step-label {
  font-size: 10px;
  line-height: 12px;
  text-align: center;
  white-space: nowrap;
}
.actions .reset {
  width: 98px;
  height: 33px;
  margin-top: 12px;
}
.zpos {
  white-space: nowrap;
  line-height: 13px;
}
.zpos > span {
  display: block;
  padding-top: 2px;
}
.zpos .readout {
  width: 90px;
  height: 17px;
  margin: 5px 0;
  font-size: 14px;
}
.action-col {
  display: grid;
  grid-template: repeat(3, 39px) / 107px;
  row-gap: 1px;
  margin-left: auto;
}
.action-col svg {
  display: block;
  margin: 0 auto 4px;
}
.contrast {
  height: 320px;
  margin-top: 8px;
  padding-left: 7px;
}
.contrast .check {
  padding-top: 4px;
}

/* scrollbars and status bar */
.vscroll {
  display: flex;
  flex-direction: column;
  align-items: center;
  width: 10px;
  padding: 6px 0;
  background: #dadada;
}
.vthumb {
  flex: 1;
  width: 100%;
  margin: 5px 0 32px;
  background: #404040;
}
.hscroll {
  display: flex;
  align-items: center;
  height: 15px;
  padding: 0 16px 0 1px;
  border-bottom: 1px solid #d0d0d0;
  background: #dadada;
}
.hthumb {
  flex: 1;
  height: 14px;
  margin: 0 18px 0 5px;
  background: #404040;
}
.tri {
  border: 7px solid transparent;
}
.tri-up {
  border-bottom-color: #404040;
  border-top: none;
}
.tri-down {
  border-top-color: #404040;
  border-bottom: none;
}
.tri-left {
  border-right-color: #404040;
  border-left: none;
}
.tri-right {
  border-left-color: #404040;
  border-right: none;
}
.status {
  display: flex;
  align-items: center;
  gap: 3px;
  height: 24px;
  padding: 1px 6px 0 1px;
  background: linear-gradient(#f1f1f1, #d6d6d6);
  font: 600 11px/23px "Open Sans", "Segoe UI", sans-serif;
}
.note {
  margin-left: auto;
}
.desktop {
  height: 4px;
  background: linear-gradient(90deg, #000 48px, #eee 48px 336px, #1a1a1a 336px 958px, #000 958px);
}
```
